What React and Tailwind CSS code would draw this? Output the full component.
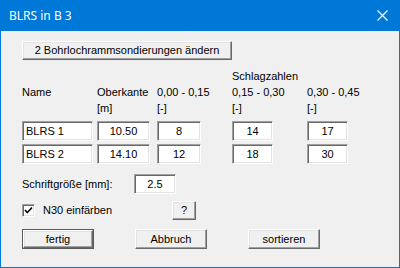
import React from "react";

const sunken =
  "bg-white border border-t-[#a0a0a0] border-l-[#a0a0a0] border-r-white border-b-white shadow-[inset_1px_1px_0_#696969,inset_-1px_-1px_0_#e3e3e3]";
const raised =
  "bg-[#f0f0f0] border border-t-white border-l-white border-r-[#696969] border-b-[#696969] shadow-[inset_-1px_-1px_0_#a0a0a0,inset_1px_1px_0_#e3e3e3]";

function Field({ value, className = "", left = false }) {
  return (
    <div
      className={`h-[20px] flex items-center ${left ? "pl-[3px]" : "justify-center"} ${sunken} ${className}`}
    >
      {value}
    </div>
  );
}

function Btn({ children, className = "", isDefault = false }) {
  return (
    <div className={`${isDefault ? "border border-[#5a5a5a]" : ""} ${className}`}>
      <div className={`h-full w-full flex items-center justify-center ${raised}`}>
        {children}
      </div>
    </div>
  );
}

const rows = [
  ["BLRS 1", "10.50", "8", "14", "17"],
  ["BLRS 2", "14.10", "12", "18", "30"],
];

export default function App() {
  return (
    <div
      className="w-[400px] h-[268px] flex flex-col border-x border-b border-[#0078d7] text-[11px] text-black"
      style={{ fontFamily: '"Liberation Sans", Arial, sans-serif' }}
    >
      {/* Title bar */}
      <div className="h-[31px] -mx-px bg-[#0078d7] flex items-center justify-between pl-[9px] pr-[11px] text-white">
        <span className="text-[12px]" style={{ fontFamily: '"Noto Sans", sans-serif' }}>
          BLRS in B 3
        </span>
        <svg width="11" height="11" viewBox="0 0 11 11" className="mr-[1px]">
          <path d="M0.5 0.5 L10.5 10.5 M10.5 0.5 L0.5 10.5" stroke="white" strokeWidth="1.2" />
        </svg>
      </div>

      {/* Body */}
      <div className="flex-1 bg-[#f0f0f0] pl-[21px] pt-[10px] flex flex-col">
        <Btn className="w-[210px] h-[19px]">2 Bohrlochrammsondierungen ändern</Btn>

        {/* Header */}
        <div className="mt-[8px] grid grid-cols-[75px_60px_75px_75px_1fr] auto-rows-[16px] items-center">
          <span />
          <span />
          <span />
          <span>Schlagzahlen</span>
          <span />
          <span>Name</span>
          <span>Oberkante</span>
          <span>0,00 - 0,15</span>
          <span>0,15 - 0,30</span>
          <span>0,30 - 0,45</span>
          <span />
          <span>[m]</span>
          <span>[-]</span>
          <span>[-]</span>
          <span>[-]</span>
        </div>

        {/* Data rows */}
        <div className="mt-[5px] flex flex-col gap-[3px]">
          {rows.map((r) => (
            <div key={r[0]} className="grid grid-cols-[75px_60px_75px_75px_1fr]">
              <Field value={r[0]} left className="w-[71px]" />
              <Field value={r[1]} className="w-[53px]" />
              <Field value={r[2]} className="w-[44px]" />
              <Field value={r[3]} className="w-[41px]" />
              <Field value={r[4]} className="w-[41px]" />
            </div>
          ))}
        </div>

        {/* Font size */}
        <div className="mt-[10px] flex items-center">
          <span className="w-[112px]">Schriftgröße [mm]:</span>
          <Field value="2.5" className="w-[42px]" />
        </div>

        {/* Checkbox row */}
        <div className="mt-[7px] flex items-center h-[19px]">
          <div className="w-[150px] flex items-center gap-[8px]">
            <div className={`w-[13px] h-[13px] flex items-center justify-center ${sunken}`}>
              <svg width="9" height="9" viewBox="0 0 9 9">
                <path d="M1 4 L3.3 6.5 L8 1.5" stroke="black" strokeWidth="1.6" fill="none" />
              </svg>
            </div>
            <span>N30 einfärben</span>
          </div>
          <Btn className="w-[24px] h-[19px]">?</Btn>
        </div>

        {/* Bottom buttons */}
        <div className="mt-[9px] flex gap-[41px]">
          <Btn isDefault className="w-[72px] h-[20px]">fertig</Btn>
          <Btn className="w-[72px] h-[20px]">Abbruch</Btn>
          <Btn className="w-[72px] h-[20px]">sortieren</Btn>
        </div>
      </div>
    </div>
  );
}
